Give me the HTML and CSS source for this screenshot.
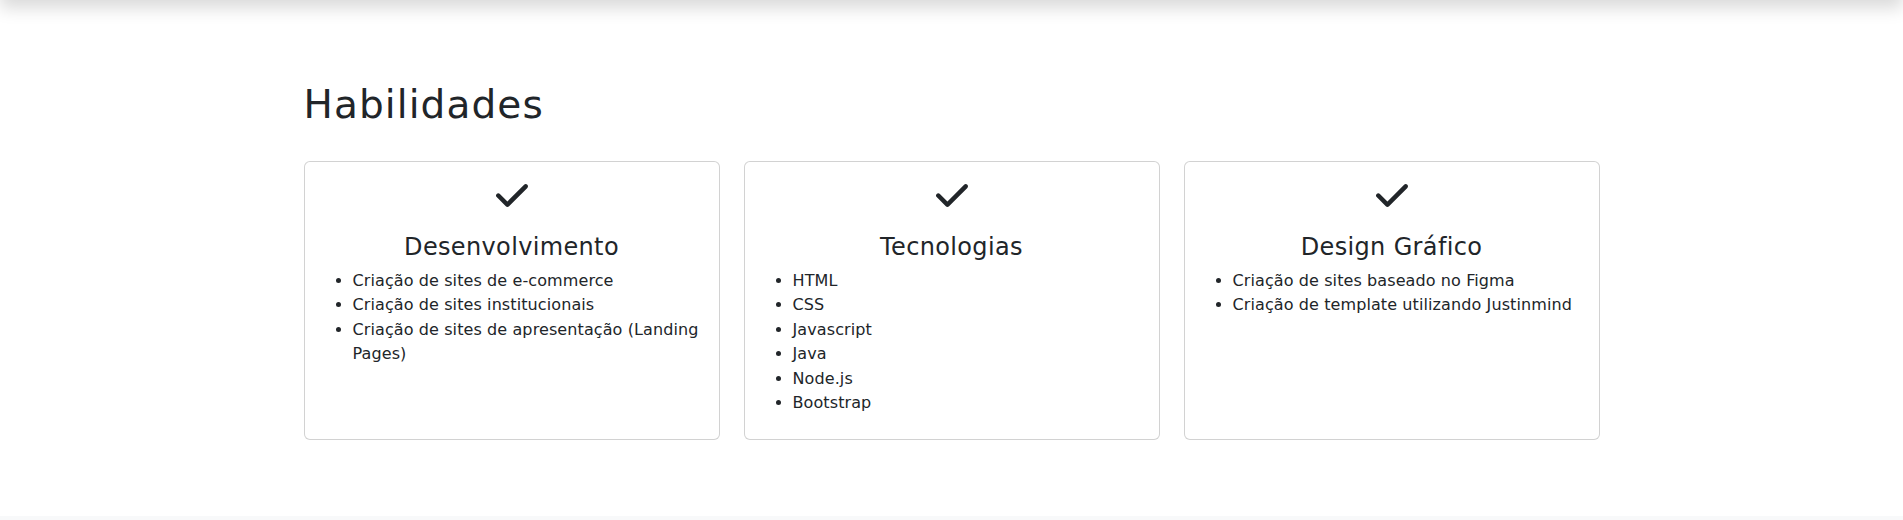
FILE: index.html
```html
<!DOCTYPE html>
<html lang="pt-BR">
<head>
<meta charset="utf-8">
<title>Habilidades</title>
<link rel="stylesheet" href="styles.css">
</head>
<body>
<header class="topbar"></header>
<main class="skills">
  <div class="container">
    <h2 class="skills-title">Habilidades</h2>
    <div class="cards">
      <div class="card">
        <svg class="check" viewBox="0 96 448 320" aria-hidden="true"><path d="M438.6 105.4c12.5 12.5 12.5 32.8 0 45.3l-256 256c-12.5 12.5-32.8 12.5-45.3 0l-128-128c-12.5-12.5-12.5-32.8 0-45.3s32.8-12.5 45.3 0L160 338.7 393.4 105.4c12.5-12.5 32.8-12.5 45.3 0z"/></svg>
        <h4 class="card-title">Desenvolvimento</h4>
        <ul class="card-list">
          <li>Criação de sites de e-commerce</li>
          <li>Criação de sites institucionais</li>
          <li>Criação de sites de apresentação (Landing Pages)</li>
        </ul>
      </div>
      <div class="card">
        <svg class="check" viewBox="0 96 448 320" aria-hidden="true"><path d="M438.6 105.4c12.5 12.5 12.5 32.8 0 45.3l-256 256c-12.5 12.5-32.8 12.5-45.3 0l-128-128c-12.5-12.5-12.5-32.8 0-45.3s32.8-12.5 45.3 0L160 338.7 393.4 105.4c12.5-12.5 32.8-12.5 45.3 0z"/></svg>
        <h4 class="card-title">Tecnologias</h4>
        <ul class="card-list">
          <li>HTML</li>
          <li>CSS</li>
          <li>Javascript</li>
          <li>Java</li>
          <li>Node.js</li>
          <li>Bootstrap</li>
        </ul>
      </div>
      <div class="card">
        <svg class="check" viewBox="0 96 448 320" aria-hidden="true"><path d="M438.6 105.4c12.5 12.5 12.5 32.8 0 45.3l-256 256c-12.5 12.5-32.8 12.5-45.3 0l-128-128c-12.5-12.5-12.5-32.8 0-45.3s32.8-12.5 45.3 0L160 338.7 393.4 105.4c12.5-12.5 32.8-12.5 45.3 0z"/></svg>
        <h4 class="card-title">Design Gráfico</h4>
        <ul class="card-list">
          <li>Criação de sites baseado no Figma</li>
          <li>Criação de template utilizando Justinmind</li>
        </ul>
      </div>
    </div>
  </div>
</main>
<footer class="footer"></footer>
</body>
</html>
```
FILE: styles.css
```css
* { box-sizing: border-box; }

html, body {
  margin: 0;
  padding: 0;
}

body {
  font-family: "DejaVu Sans", "Liberation Sans", sans-serif;
  color: #212529;
  background: #fff;
  font-size: 16px;
}

.topbar {
  height: 56px;
  margin-top: -56px;
  background: #fff;
  box-shadow: 0 8px 16px rgba(0, 0, 0, 0.15);
  position: relative;
  z-index: 1;
}

.skills {
  padding: 81px 0 76px;
}

.container {
  max-width: 1320px;
  margin: 0 auto;
  padding: 0 12px;
}

.skills-title {
  margin: 0 0 33px;
  font-size: 39px;
  line-height: 47px;
  font-weight: 400;
  letter-spacing: 1.1px;
}

.cards {
  display: grid;
  grid-template-columns: repeat(3, 1fr);
  gap: 24px;
}

.card {
  border: 1px solid rgba(0, 0, 0, 0.175);
  border-radius: 6px;
  padding: 16px;
  background: #fff;
}

.check {
  display: block;
  width: 32px;
  height: 23px;
  margin: 6px auto 0;
  fill: #212529;
}

.card-title {
  margin: 26px 0 7px;
  text-align: center;
  font-size: 24px;
  line-height: 28.8px;
  font-weight: 400;
  letter-spacing: 0.35px;
}

.card-list {
  margin: 0 0 7px;
  padding-left: 32px;
  font-size: 16px;
  line-height: 24.5px;
  letter-spacing: 0.1px;
}

.footer {
  height: 4px;
  background: #f8f9fa;
}
```
